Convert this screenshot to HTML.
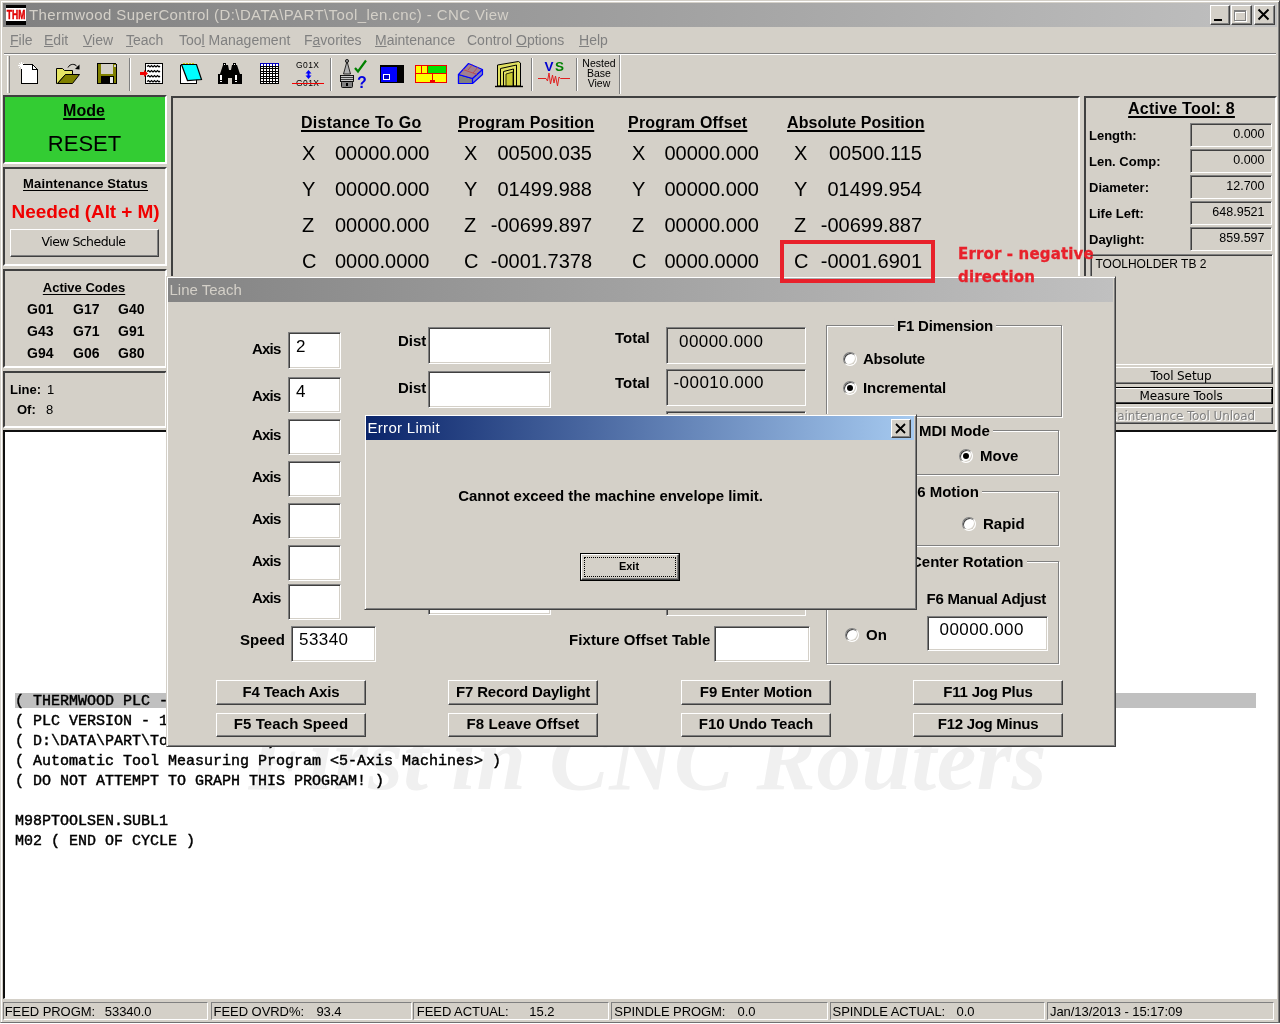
<!DOCTYPE html>
<html><head><meta charset="utf-8"><title>Thermwood SuperControl</title>
<style>
*{box-sizing:border-box;margin:0;padding:0}
html,body{width:1280px;height:1024px;overflow:hidden;background:#d4d0c8;font-family:"Liberation Sans",sans-serif;color:#000}
.a{position:absolute}
.t{position:absolute;white-space:pre;line-height:1}
.b{font-weight:bold}
.u{text-decoration:underline;text-decoration-thickness:1px;text-underline-offset:1.5px;text-decoration-skip-ink:none}
.u2{text-decoration:underline;text-decoration-thickness:2px;text-underline-offset:1.8px;text-decoration-skip-ink:none}
.panel{position:absolute;border:2px solid;border-color:#404040 #fff #fff #404040;background:#d4d0c8}
.btn{position:absolute;background:#d4d0c8;border:1px solid;border-color:#fff #404040 #404040 #fff;box-shadow:inset -1px -1px 0 #808080}
.edit{position:absolute;background:#fff;border:1px solid;border-color:#808080 #fff #fff #808080;box-shadow:inset 1px 1px 0 #404040,inset -1px -1px 0 #d4d0c8}
.ro{position:absolute;background:#d4d0c8;border:1px solid;border-color:#808080 #fff #fff #808080;box-shadow:inset 1px 1px 0 #404040}
.grp{position:absolute;border:1px solid #808080;box-shadow:inset 1px 1px 0 #fff,1px 1px 0 #fff}
.dlg{position:absolute;background:#d4d0c8;border:1px solid;border-color:#d4d0c8 #404040 #404040 #d4d0c8;box-shadow:inset 1px 1px 0 #fff,inset -1px -1px 0 #808080}
.radio{position:absolute;width:14px;height:14px;border-radius:50%;background:#fff;border:1px solid;border-color:#808080 #fff #fff #808080;box-shadow:inset 1px 1px 0 #404040,inset -1px -1px 0 #d4d0c8}
.radio.on::after{content:"";position:absolute;left:3px;top:3px;width:6px;height:6px;border-radius:50%;background:#000}
.sb{position:absolute;border:1px solid;border-color:#808080 #fff #fff #808080;top:1002px;height:18px}
</style></head><body><div id="desk" style="position:absolute;left:0;top:0;width:1280px;height:1024px;overflow:hidden;will-change:transform">
<div class="a" style="left:0;top:1023px;width:1280px;height:1px;background:#fff"></div><div class="a" style="left:0;top:0;width:1280px;height:1023px;border:1px solid;border-color:#d4d0c8 #404040 #707070 #d4d0c8;box-shadow:inset 1px 1px 0 #fff,inset -1px 0 0 #808080"></div>
<div class="a" style="left:3px;top:3px;width:1274px;height:24px;background:linear-gradient(90deg,#808080,#c0c0c0)"></div>
<svg class="a" style="left:6px;top:5px" width="20" height="20" viewBox="0 0 20 20"><rect width="20" height="20" fill="#000"/><rect y="3" width="20" height="13" fill="#fff"/><text x="10" y="14" text-anchor="middle" font-family="Liberation Sans,sans-serif" font-weight="bold" font-size="12" fill="#e00000" stroke="#e00000" stroke-width="0.5" textLength="18.5" lengthAdjust="spacingAndGlyphs">THM</text></svg>
<div class="t " style="left:29px;top:7.30px;font-size:15px;color:#d4d0c8;letter-spacing:0.4px">Thermwood SuperControl (D:\DATA\PART\Tool_len.cnc) - CNC View</div>
<div class="btn" style="left:1210px;top:5px;width:20px;height:20px;"></div>
<div class="btn" style="left:1231px;top:5px;width:21px;height:20px;"></div>
<div class="btn" style="left:1254px;top:5px;width:21px;height:20px;"></div>
<div class="a" style="left:1214px;top:19px;width:8px;height:2px;background:#000"></div>
<div class="a" style="left:1234px;top:10px;width:12px;height:11px;border:1px solid #808080;border-top-width:2px;box-shadow:1px 1px 0 #fff,inset 1px 1px 0 #fff"></div>
<svg class="a" style="left:1257px;top:8px" width="13" height="13" viewBox="0 0 13 13"><path d="M1.5 1.5 L11.5 11.5 M11.5 1.5 L1.5 11.5" stroke="#000" stroke-width="2"/></svg>
<div class="t " style="left:10px;top:33.15px;font-size:14px;color:#808080"><u>F</u>ile</div>
<div class="t " style="left:44px;top:33.15px;font-size:14px;color:#808080"><u>E</u>dit</div>
<div class="t " style="left:83px;top:33.15px;font-size:14px;color:#808080"><u>V</u>iew</div>
<div class="t " style="left:126px;top:33.15px;font-size:14px;color:#808080"><u>T</u>each</div>
<div class="t " style="left:179px;top:33.15px;font-size:14px;color:#808080">Too<u>l</u> Management</div>
<div class="t " style="left:304px;top:33.15px;font-size:14px;color:#808080">F<u>a</u>vorites</div>
<div class="t " style="left:375px;top:33.15px;font-size:14px;color:#808080"><u>M</u>aintenance</div>
<div class="t " style="left:467px;top:33.15px;font-size:14px;color:#808080">Control <u>O</u>ptions</div>
<div class="t " style="left:579px;top:33.15px;font-size:14px;color:#808080"><u>H</u>elp</div>
<div class="a" style="left:4px;top:53px;width:1272px;height:2px;border-top:1px solid #808080;border-bottom:1px solid #fff"></div>
<div class="a" style="left:7px;top:56px;width:3px;height:37px;border-left:1px solid #fff;border-right:1px solid #808080"></div>
<div class="a" style="left:129px;top:58px;width:2px;height:33px;border-left:1px solid #808080;border-right:1px solid #fff"></div>
<div class="a" style="left:330px;top:58px;width:2px;height:33px;border-left:1px solid #808080;border-right:1px solid #fff"></div>
<div class="a" style="left:531px;top:58px;width:2px;height:33px;border-left:1px solid #808080;border-right:1px solid #fff"></div>
<div class="a" style="left:576px;top:58px;width:2px;height:33px;border-left:1px solid #808080;border-right:1px solid #fff"></div>
<div class="a" style="left:619px;top:55px;width:2px;height:39px;border-left:1px solid #808080;border-right:1px solid #fff"></div>
<svg class="a" style="left:0;top:52px" width="640" height="46" viewBox="0 52 640 46" shape-rendering="crispEdges">
<!-- new -->
<path d="M21.5 64.5H32.5L37.5 69.5V83.5H21.5Z" fill="#fff" stroke="#000"/>
<path d="M32.5 64.5V69.5H37.5" fill="none" stroke="#000"/>
<path d="M18 65.5H25M21.5 62V69M19 63L24 68M24 63L19 68" stroke="#fff" stroke-width="1" shape-rendering="auto"/>
<!-- open -->
<path d="M56.5 83.5V68.5H62.5L64.5 70.5H72.5V74.5L65.5 74.5L57.5 83.5Z" fill="#e6e664" stroke="#000" shape-rendering="auto"/>
<path d="M57.5 83.5L65.5 74.5H79.5L72.5 83.5Z" fill="#808000" stroke="#000" shape-rendering="auto"/>
<path d="M68 67.5C70 63.5 75 63.5 77 66.5" fill="none" stroke="#000" shape-rendering="auto"/>
<path d="M75 69L79.5 64.5V69.5Z" fill="#000" shape-rendering="auto"/>
<!-- save -->
<path d="M97.5 63.5H115.5L116.5 64.5V83.5H97.5Z" fill="#808000" stroke="#000"/>
<rect x="101" y="64" width="12" height="10" fill="#d4d0c8"/>
<rect x="113" y="64" width="1" height="10" fill="#000" opacity=".0"/>
<rect x="101" y="76" width="13" height="8" fill="#000"/>
<rect x="110" y="77" width="3" height="6" fill="#e8e8e8"/>
<rect x="114" y="65" width="2" height="2" fill="#d4d0c8"/>
<!-- doc w/ arrow -->
<rect x="145.5" y="63.5" width="17" height="20" fill="#fff" stroke="#000"/>
<g fill="none" stroke="#000" stroke-width="1.2" shape-rendering="auto">
<path d="M147 66.5l1.5-1 1.5 1.5 1.5-1.5 1.5 1.5 1.5-1.5 1.5 1.5 1.5-1.5 1.5 1.5 1-1"/>
<path d="M147 71.5l1.5-1 1.5 1.5 1.5-1.5 1.5 1.5 1.5-1.5 1.5 1.5 1.5-1.5 1.5 1.5 1-1"/>
<path d="M147 76.5l1.5-1 1.5 1.5 1.5-1.5 1.5 1.5 1.5-1.5 1.5 1.5 1.5-1.5 1.5 1.5 1-1"/>
<path d="M147 81.5l1.5-1 1.5 1.5 1.5-1.5 1.5 1.5 1.5-1.5 1.5 1.5 1.5-1.5 1.5 1.5 1-1"/>
</g>
<path d="M140 72H144V70L148 73.5L144 77V75H140Z" fill="#f00000" shape-rendering="auto"/>
<!-- notepad -->
<path d="M180.5 64.5V83.5H196.5V79" fill="#fff" stroke="#000"/>
<path d="M181.5 64.5H196.5L201.5 79.5L187.5 80.5Z" fill="#00ffff" stroke="#000" stroke-width="1.2" shape-rendering="auto"/>
<path d="M183 63.5H195" stroke="#c8c800" stroke-width="1" stroke-dasharray="1.5 1.5"/>
<!-- binoculars -->
<g fill="#000">
<rect x="218" y="74" width="10" height="10"/><rect x="232" y="74" width="10" height="10"/>
<path d="M220 74L223 65H228L229 70H231L232 65H237L240 74Z" shape-rendering="auto"/>
<rect x="223" y="63" width="3" height="3"/><rect x="233" y="63" width="3" height="3"/>
<rect x="226" y="70" width="8" height="8"/>
</g>
<rect x="220" y="75" width="2" height="5" fill="#fff"/><rect x="235" y="75" width="2" height="5" fill="#fff"/>
<rect x="220" y="81" width="2" height="1" fill="#fff"/><rect x="235" y="81" width="2" height="1" fill="#fff"/>
<rect x="224" y="64" width="1" height="1" fill="#fff"/><rect x="234" y="64" width="1" height="1" fill="#fff"/>
<!-- grid -->
<rect x="260" y="63" width="19" height="21" fill="#000"/>
<rect x="260" y="63" width="19" height="3" fill="#0000c0"/>
<g fill="#fff">
<rect x="261" y="64.0" width="2" height="1.5"/>
<rect x="264" y="64.0" width="2" height="1.5"/>
<rect x="267" y="64.0" width="2" height="1.5"/>
<rect x="270" y="64.0" width="2" height="1.5"/>
<rect x="273" y="64.0" width="2" height="1.5"/>
<rect x="276" y="64.0" width="2" height="1.5"/>
<rect x="261" y="66.5" width="2" height="1.5"/>
<rect x="264" y="66.5" width="2" height="1.5"/>
<rect x="267" y="66.5" width="2" height="1.5"/>
<rect x="270" y="66.5" width="2" height="1.5"/>
<rect x="273" y="66.5" width="2" height="1.5"/>
<rect x="276" y="66.5" width="2" height="1.5"/>
<rect x="261" y="69.0" width="2" height="1.5"/>
<rect x="264" y="69.0" width="2" height="1.5"/>
<rect x="267" y="69.0" width="2" height="1.5"/>
<rect x="270" y="69.0" width="2" height="1.5"/>
<rect x="273" y="69.0" width="2" height="1.5"/>
<rect x="276" y="69.0" width="2" height="1.5"/>
<rect x="261" y="71.5" width="2" height="1.5"/>
<rect x="264" y="71.5" width="2" height="1.5"/>
<rect x="267" y="71.5" width="2" height="1.5"/>
<rect x="270" y="71.5" width="2" height="1.5"/>
<rect x="273" y="71.5" width="2" height="1.5"/>
<rect x="276" y="71.5" width="2" height="1.5"/>
<rect x="261" y="74.0" width="2" height="1.5"/>
<rect x="264" y="74.0" width="2" height="1.5"/>
<rect x="267" y="74.0" width="2" height="1.5"/>
<rect x="270" y="74.0" width="2" height="1.5"/>
<rect x="273" y="74.0" width="2" height="1.5"/>
<rect x="276" y="74.0" width="2" height="1.5"/>
<rect x="261" y="76.5" width="2" height="1.5"/>
<rect x="264" y="76.5" width="2" height="1.5"/>
<rect x="267" y="76.5" width="2" height="1.5"/>
<rect x="270" y="76.5" width="2" height="1.5"/>
<rect x="273" y="76.5" width="2" height="1.5"/>
<rect x="276" y="76.5" width="2" height="1.5"/>
<rect x="261" y="79.0" width="2" height="1.5"/>
<rect x="264" y="79.0" width="2" height="1.5"/>
<rect x="267" y="79.0" width="2" height="1.5"/>
<rect x="270" y="79.0" width="2" height="1.5"/>
<rect x="273" y="79.0" width="2" height="1.5"/>
<rect x="276" y="79.0" width="2" height="1.5"/>
<rect x="261" y="81.5" width="2" height="1.5"/>
<rect x="264" y="81.5" width="2" height="1.5"/>
<rect x="267" y="81.5" width="2" height="1.5"/>
<rect x="270" y="81.5" width="2" height="1.5"/>
<rect x="273" y="81.5" width="2" height="1.5"/>
<rect x="276" y="81.5" width="2" height="1.5"/>
</g>
<!-- G01X -->
<g font-family="Liberation Sans,sans-serif" font-size="8.5" fill="#000" shape-rendering="auto">
<text x="296" y="67.8" textLength="23">G01X</text>
<text x="296" y="85.8" textLength="23">G01X</text>
</g>
<path d="M292 83.5H324" stroke="#f00000" stroke-width="1"/>
<path d="M308.5 70L311.5 73.5H309.5V75.5H311.5L308.5 79L305.5 75.5H307.5V73.5H305.5Z" fill="#0000ff" shape-rendering="auto"/>
<!-- tool holder -->
<g shape-rendering="auto">
<circle cx="347" cy="61" r="1.6" fill="#808080" stroke="#000" stroke-width=".8"/>
<path d="M346.5 63L343.5 74H350.5L347.5 63Z" fill="#b0b0b0" stroke="#000" stroke-width=".8"/>
<rect x="340.5" y="75.5" width="13" height="6" fill="#c8c8c8" stroke="#000" stroke-width=".9"/>
<path d="M340.5 77.5H353.5M340.5 79.5H353.5" stroke="#000" stroke-width=".7"/>
<rect x="341.5" y="81.5" width="11" height="6" rx="1" fill="#808080" stroke="#000" stroke-width=".9"/>
<rect x="346" y="83" width="2" height="3" fill="#000"/>
<path d="M355 68L358 71.5L366 60.5" fill="none" stroke="#008000" stroke-width="2.2"/>
<text x="357" y="87.5" font-family="Liberation Sans,sans-serif" font-size="16" font-weight="bold" fill="#0000e0">?</text>
</g>
<!-- blue/black -->
<rect x="380" y="65" width="24" height="18" fill="#000"/>
<rect x="381" y="67" width="16" height="15" fill="#0000ff"/>
<rect x="383.5" y="74.5" width="6" height="5" fill="#0000c0" stroke="#fff"/>
<!-- layout -->
<rect x="415.5" y="65.5" width="31" height="17" fill="#ffff00" stroke="#f00000"/>
<rect x="428" y="66" width="18" height="7" fill="#00e000"/>
<path d="M415.5 73.5H446.5M421.5 66V73M427.5 66V73M432.5 74V82" stroke="#f00000" fill="none"/>
<rect x="430" y="80" width="5" height="3" fill="#f00000"/>
<!-- 3D block -->
<g shape-rendering="auto" stroke="#0000ff" stroke-width="1.2" stroke-linejoin="round">
<path d="M458.5 74.5V83.5H472.5L482.5 74.5V69.5L472.5 78Z" fill="#8080c0"/>
<path d="M458.5 74.5V83.5H472.5V78.5Z" fill="#808080"/>
<path d="M458.5 74.5L468.5 63.5L482.5 69.5L472.5 78.5Z" fill="#a08090"/>
<path d="M463 69.5L477 74.5M468 70L472.5 64.5M473 73L478 67" stroke="#c04040" stroke-width=".8" fill="none"/>
</g>
<!-- arch -->
<g shape-rendering="auto">
<path d="M497.5 86V65L518.5 61.5L520.5 63V86Z" fill="#e0e060" stroke="#000" stroke-width="1"/>
<path d="M500.5 86V68.5L516.5 65V86M503.5 86V71.5L513.5 69V86" fill="none" stroke="#000" stroke-width="1"/>
<path d="M506 86V74L513 72V86Z" fill="#c8c830" stroke="#000" stroke-width=".8"/>
<path d="M495 86.5H523" stroke="#000" stroke-width="1.4"/>
</g>
<!-- VS -->
<g font-family="Liberation Sans,sans-serif" font-size="13" font-weight="bold" shape-rendering="auto">
<text x="544.5" y="71" fill="#0000d0" textLength="9" lengthAdjust="spacingAndGlyphs">V</text>
<text x="555" y="71" fill="#008000" textLength="9" lengthAdjust="spacingAndGlyphs">S</text>
</g>
<path d="M538 78.5H546L547.5 81L549 73L550.5 84L552.5 75L554 83L555.5 76L557.5 86L559 77L560.5 78.5H570" fill="none" stroke="#e02020" stroke-width="1" shape-rendering="auto"/>
</svg>

<div class="t " style="left:599px;transform:translateX(-50%);top:58.11px;font-size:10.5px;">Nested</div>
<div class="t " style="left:599px;transform:translateX(-50%);top:67.61px;font-size:10.5px;">Base</div>
<div class="t " style="left:599px;transform:translateX(-50%);top:77.61px;font-size:10.5px;">View</div>
<div class="panel" style="left:3px;top:95px;width:164px;height:69px;background:#33cc33"></div>
<div class="t b u2" style="left:84px;transform:translateX(-50%);top:103.46px;font-size:16px;">Mode</div>
<div class="t " style="left:84.5px;transform:translateX(-50%);top:132.88px;font-size:22px;">RESET</div>
<div class="panel" style="left:3px;top:167px;width:164px;height:99px;"></div>
<div class="t b u" style="left:85.5px;transform:translateX(-50%);top:176.50px;font-size:13px;letter-spacing:0.16px">Maintenance Status</div>
<div class="t b" style="left:85.5px;transform:translateX(-50%);top:202.42px;font-size:19px;color:#f00000;letter-spacing:-0.1px">Needed (Alt + M)</div>
<div class="btn" style="left:10px;top:229px;width:149px;height:28px;"></div>
<div class="t " style="left:83.5px;transform:translateX(-50%);top:235.93px;font-size:12.5px;font-family:'DejaVu Sans',sans-serif;letter-spacing:-0.55px">View Schedule</div>
<div class="panel" style="left:3px;top:269px;width:164px;height:99px;"></div>
<div class="t b u" style="left:84px;transform:translateX(-50%);top:281.00px;font-size:13px;">Active Codes</div>
<div class="t b" style="left:27px;top:302.15px;font-size:14px;">G01</div>
<div class="t b" style="left:73px;top:302.15px;font-size:14px;">G17</div>
<div class="t b" style="left:118px;top:302.15px;font-size:14px;">G40</div>
<div class="t b" style="left:27px;top:324.15px;font-size:14px;">G43</div>
<div class="t b" style="left:73px;top:324.15px;font-size:14px;">G71</div>
<div class="t b" style="left:118px;top:324.15px;font-size:14px;">G91</div>
<div class="t b" style="left:27px;top:346.15px;font-size:14px;">G94</div>
<div class="t b" style="left:73px;top:346.15px;font-size:14px;">G06</div>
<div class="t b" style="left:118px;top:346.15px;font-size:14px;">G80</div>
<div class="panel" style="left:3px;top:371px;width:164px;height:57px;"></div>
<div class="t b" style="left:10px;top:383.00px;font-size:13px;">Line:</div>
<div class="t " style="left:47px;top:383.00px;font-size:13px;">1</div>
<div class="t b" style="left:17px;top:403.00px;font-size:13px;">Of:</div>
<div class="t " style="left:46px;top:403.00px;font-size:13px;">8</div>
<div class="panel" style="left:171px;top:96px;width:909px;height:336px;"></div>
<div class="t b u2" style="left:301px;top:114.96px;font-size:16px;letter-spacing:0.31px">Distance To Go</div>
<div class="t b u2" style="left:458px;top:114.96px;font-size:16px;letter-spacing:0.18px">Program Position</div>
<div class="t b u2" style="left:628px;top:114.96px;font-size:16px;letter-spacing:0.21px">Program Offset</div>
<div class="t b u2" style="left:787px;top:114.96px;font-size:16px;letter-spacing:0.09px">Absolute Position</div>
<div class="t " style="left:302px;top:143.07px;font-size:20px;">X</div>
<div class="t " style="right:850.5px;top:143.07px;font-size:20px;">00000.000</div>
<div class="t " style="left:464px;top:143.07px;font-size:20px;">X</div>
<div class="t " style="right:688px;top:143.07px;font-size:20px;">00500.035</div>
<div class="t " style="left:632px;top:143.07px;font-size:20px;">X</div>
<div class="t " style="right:521px;top:143.07px;font-size:20px;">00000.000</div>
<div class="t " style="left:794px;top:143.07px;font-size:20px;">X</div>
<div class="t " style="right:358px;top:143.07px;font-size:20px;">00500.115</div>
<div class="t " style="left:302px;top:179.07px;font-size:20px;">Y</div>
<div class="t " style="right:850.5px;top:179.07px;font-size:20px;">00000.000</div>
<div class="t " style="left:464px;top:179.07px;font-size:20px;">Y</div>
<div class="t " style="right:688px;top:179.07px;font-size:20px;">01499.988</div>
<div class="t " style="left:632px;top:179.07px;font-size:20px;">Y</div>
<div class="t " style="right:521px;top:179.07px;font-size:20px;">00000.000</div>
<div class="t " style="left:794px;top:179.07px;font-size:20px;">Y</div>
<div class="t " style="right:358px;top:179.07px;font-size:20px;">01499.954</div>
<div class="t " style="left:302px;top:215.07px;font-size:20px;">Z</div>
<div class="t " style="right:850.5px;top:215.07px;font-size:20px;">00000.000</div>
<div class="t " style="left:464px;top:215.07px;font-size:20px;">Z</div>
<div class="t " style="right:688px;top:215.07px;font-size:20px;">-00699.897</div>
<div class="t " style="left:632px;top:215.07px;font-size:20px;">Z</div>
<div class="t " style="right:521px;top:215.07px;font-size:20px;">00000.000</div>
<div class="t " style="left:794px;top:215.07px;font-size:20px;">Z</div>
<div class="t " style="right:358px;top:215.07px;font-size:20px;">-00699.887</div>
<div class="t " style="left:302px;top:251.07px;font-size:20px;">C</div>
<div class="t " style="right:850.5px;top:251.07px;font-size:20px;">0000.0000</div>
<div class="t " style="left:464px;top:251.07px;font-size:20px;">C</div>
<div class="t " style="right:688px;top:251.07px;font-size:20px;">-0001.7378</div>
<div class="t " style="left:632px;top:251.07px;font-size:20px;">C</div>
<div class="t " style="right:521px;top:251.07px;font-size:20px;">0000.0000</div>
<div class="t " style="left:794px;top:251.07px;font-size:20px;">C</div>
<div class="t " style="right:358px;top:251.07px;font-size:20px;">-0001.6901</div>
<div class="panel" style="left:1084px;top:96px;width:193px;height:336px;"></div>
<div class="t b u2" style="left:1181.5px;transform:translateX(-50%);top:101.46px;font-size:16px;letter-spacing:0.22px">Active Tool: 8</div>
<div class="t b" style="left:1089px;top:129.00px;font-size:13px;">Length:</div>
<div class="ro" style="left:1190px;top:123px;width:82px;height:24px;"></div>
<div class="t " style="right:15.5px;top:128.12px;font-size:12.5px;">0.000</div>
<div class="t b" style="left:1089px;top:155.00px;font-size:13px;">Len. Comp:</div>
<div class="ro" style="left:1190px;top:149px;width:82px;height:24px;"></div>
<div class="t " style="right:15.5px;top:154.12px;font-size:12.5px;">0.000</div>
<div class="t b" style="left:1089px;top:181.00px;font-size:13px;">Diameter:</div>
<div class="ro" style="left:1190px;top:175px;width:82px;height:24px;"></div>
<div class="t " style="right:15.5px;top:180.12px;font-size:12.5px;">12.700</div>
<div class="t b" style="left:1089px;top:207.00px;font-size:13px;">Life Left:</div>
<div class="ro" style="left:1190px;top:201px;width:82px;height:24px;"></div>
<div class="t " style="right:15.5px;top:206.12px;font-size:12.5px;">648.9521</div>
<div class="t b" style="left:1089px;top:233.00px;font-size:13px;">Daylight:</div>
<div class="ro" style="left:1190px;top:227px;width:82px;height:24px;"></div>
<div class="t " style="right:15.5px;top:232.12px;font-size:12.5px;">859.597</div>
<div class="ro" style="left:1090px;top:254px;width:183px;height:111px;"></div>
<div class="t " style="left:1095.5px;top:257.84px;font-size:12px;">TOOLHOLDER TB 2</div>
<div class="btn" style="left:1088px;top:367px;width:185px;height:17px;"></div>
<div class="t " style="left:1181px;transform:translateX(-50%);top:369.85px;font-size:12px;font-family:'DejaVu Sans',sans-serif;letter-spacing:-0.1px">Tool Setup</div>
<div class="btn" style="left:1088px;top:387px;width:185px;height:17px;border-color:#000;box-shadow:inset 1px 1px 0 #fff,inset -1px -1px 0 #404040"></div>
<div class="t " style="left:1181px;transform:translateX(-50%);top:389.85px;font-size:12px;font-family:'DejaVu Sans',sans-serif;letter-spacing:-0.1px">Measure Tools</div>
<div class="btn" style="left:1088px;top:407px;width:185px;height:17px;"></div>
<div class="t " style="left:1181px;transform:translateX(-50%);top:409.85px;font-size:12px;font-family:'DejaVu Sans',sans-serif;letter-spacing:-0.1px;color:#808080;text-shadow:1px 1px 0 #fff">Maintenance Tool Unload</div>
<div class="a" style="left:3px;top:430px;width:1274px;height:569px;background:#fff;border:2px solid;border-color:#101010 #fff #fff #101010;border-right-width:1px;border-bottom-width:1px"></div>
<div class="t b" style="left:248px;top:715.46px;font-size:89px;font-family:'Liberation Serif',serif;font-style:italic;color:#f0f0f0;letter-spacing:0.5px">First in CNC Routers</div>
<div class="a" style="left:15px;top:692.5px;width:1241px;height:15.5px;background:#c0c0c0"></div>
<div class="t " style="left:15px;top:693.80px;font-size:15px;font-family:'Liberation Mono',monospace;-webkit-text-stroke:0.45px #000">( THERMWOOD PLC - </div>
<div class="t " style="left:15px;top:713.80px;font-size:15px;font-family:'Liberation Mono',monospace;-webkit-text-stroke:0.45px #000">( PLC VERSION - 1</div>
<div class="t " style="left:15px;top:733.80px;font-size:15px;font-family:'Liberation Mono',monospace;-webkit-text-stroke:0.45px #000">( D:\DATA\PART\Tool_len.cnc )</div>
<div class="t " style="left:15px;top:753.80px;font-size:15px;font-family:'Liberation Mono',monospace;-webkit-text-stroke:0.45px #000">( Automatic Tool Measuring Program &lt;5-Axis Machines&gt; )</div>
<div class="t " style="left:15px;top:773.80px;font-size:15px;font-family:'Liberation Mono',monospace;-webkit-text-stroke:0.45px #000">( DO NOT ATTEMPT TO GRAPH THIS PROGRAM! )</div>
<div class="t " style="left:15px;top:813.80px;font-size:15px;font-family:'Liberation Mono',monospace;-webkit-text-stroke:0.45px #000">M98PTOOLSEN.SUBL1</div>
<div class="t " style="left:15px;top:833.80px;font-size:15px;font-family:'Liberation Mono',monospace;-webkit-text-stroke:0.45px #000">M02 ( END OF CYCLE )</div>
<div class="sb" style="left:3px;width:205px"></div>
<div class="t " style="left:4.7px;top:1005.00px;font-size:13px;letter-spacing:-0.06px">FEED PROGM:</div>
<div class="t " style="left:104.8px;top:1005.00px;font-size:13px;letter-spacing:-0.06px">53340.0</div>
<div class="sb" style="left:211px;width:201px"></div>
<div class="t " style="left:213.6px;top:1005.00px;font-size:13px;letter-spacing:-0.06px">FEED OVRD%:</div>
<div class="t " style="left:316.4px;top:1005.00px;font-size:13px;letter-spacing:-0.06px">93.4</div>
<div class="sb" style="left:413px;width:196px"></div>
<div class="t " style="left:416.8px;top:1005.00px;font-size:13px;letter-spacing:-0.06px">FEED ACTUAL:</div>
<div class="t " style="left:529.3px;top:1005.00px;font-size:13px;letter-spacing:-0.06px">15.2</div>
<div class="sb" style="left:611px;width:217px"></div>
<div class="t " style="left:614.3px;top:1005.00px;font-size:13px;letter-spacing:-0.06px">SPINDLE PROGM:</div>
<div class="t " style="left:737.6px;top:1005.00px;font-size:13px;letter-spacing:-0.06px">0.0</div>
<div class="sb" style="left:830px;width:215px"></div>
<div class="t " style="left:832.6px;top:1005.00px;font-size:13px;letter-spacing:-0.06px">SPINDLE ACTUAL:</div>
<div class="t " style="left:956.5px;top:1005.00px;font-size:13px;letter-spacing:-0.06px">0.0</div>
<div class="sb" style="left:1047px;width:227px"></div>
<div class="t " style="left:1050px;top:1005.00px;font-size:13px;letter-spacing:-0.06px">Jan/13/2013 - 15:17:09</div>
<div class="dlg" style="left:166px;top:276px;width:950px;height:471px;"></div>
<div class="a" style="left:168px;top:278px;width:945px;height:24px;background:linear-gradient(90deg,#848484,#c0c0c0)"></div>
<div class="t " style="left:169.5px;top:282.30px;font-size:15px;color:#d4d0c8">Line Teach</div>
<div class="t b" style="left:252px;top:341.30px;font-size:15px;letter-spacing:-0.8px">Axis</div>
<div class="edit" style="left:288px;top:332px;width:53px;height:37px;"></div>
<div class="t b" style="left:252px;top:388.30px;font-size:15px;letter-spacing:-0.8px">Axis</div>
<div class="edit" style="left:288px;top:377px;width:53px;height:36px;"></div>
<div class="t b" style="left:252px;top:426.80px;font-size:15px;letter-spacing:-0.8px">Axis</div>
<div class="edit" style="left:288px;top:419px;width:53px;height:36px;"></div>
<div class="t b" style="left:252px;top:468.80px;font-size:15px;letter-spacing:-0.8px">Axis</div>
<div class="edit" style="left:288px;top:461px;width:53px;height:36px;"></div>
<div class="t b" style="left:252px;top:510.80px;font-size:15px;letter-spacing:-0.8px">Axis</div>
<div class="edit" style="left:288px;top:503px;width:53px;height:36px;"></div>
<div class="t b" style="left:252px;top:552.80px;font-size:15px;letter-spacing:-0.8px">Axis</div>
<div class="edit" style="left:288px;top:545px;width:53px;height:36px;"></div>
<div class="t b" style="left:252px;top:589.80px;font-size:15px;letter-spacing:-0.8px">Axis</div>
<div class="edit" style="left:288px;top:584px;width:53px;height:36px;"></div>
<div class="t " style="left:296px;top:337.61px;font-size:17px;">2</div>
<div class="t " style="left:296px;top:382.61px;font-size:17px;">4</div>
<div class="t b" style="left:398px;top:333.30px;font-size:15px;">Dist</div>
<div class="t b" style="left:398px;top:380.30px;font-size:15px;">Dist</div>
<div class="edit" style="left:428px;top:327px;width:123px;height:37px;"></div>
<div class="edit" style="left:428px;top:371px;width:123px;height:37px;"></div>
<div class="t b" style="left:615px;top:330.30px;font-size:15px;">Total</div>
<div class="t b" style="left:615px;top:375.30px;font-size:15px;">Total</div>
<div class="ro" style="left:666px;top:327px;width:140px;height:37px;"></div>
<div class="ro" style="left:666px;top:369px;width:140px;height:37px;"></div>
<div class="t " style="left:679px;top:332.61px;font-size:17px;letter-spacing:0.45px">00000.000</div>
<div class="t " style="left:673.5px;top:374.11px;font-size:17px;letter-spacing:0.45px">-00010.000</div>
<div class="ro" style="left:666px;top:411px;width:140px;height:36px;"></div>
<div class="edit" style="left:428px;top:579px;width:123px;height:36px;"></div>
<div class="ro" style="left:666px;top:579px;width:140px;height:37px;"></div>
<div class="t b" style="left:240px;top:632.30px;font-size:15px;">Speed</div>
<div class="edit" style="left:291px;top:626px;width:85px;height:36px;"></div>
<div class="t " style="left:299px;top:631.11px;font-size:17px;letter-spacing:0.45px">53340</div>
<div class="t b" style="left:569px;top:632.30px;font-size:15px;letter-spacing:0.08px">Fixture Offset Table</div>
<div class="edit" style="left:714px;top:626px;width:96px;height:36px;"></div>
<div class="grp" style="left:826px;top:325px;width:236px;height:92px;"></div>
<div class="t b" style="left:945px;transform:translateX(-50%);top:318.30px;font-size:15px;background:#d4d0c8;padding:0 3px;letter-spacing:-0.2px">F1 Dimension</div>
<div class="radio" style="left:843px;top:352px"></div>
<div class="t b" style="left:863px;top:351.30px;font-size:15px;letter-spacing:-0.3px">Absolute</div>
<div class="radio on" style="left:843px;top:381px"></div>
<div class="t b" style="left:863px;top:380.30px;font-size:15px;letter-spacing:-0.1px">Incremental</div>
<div class="grp" style="left:826px;top:430px;width:233px;height:45px;"></div>
<div class="t b" style="left:916px;top:423.30px;font-size:15px;background:#d4d0c8;padding:0 3px">MDI Mode</div>
<div class="radio on" style="left:959px;top:449px"></div>
<div class="t b" style="left:980px;top:448.30px;font-size:15px;">Move</div>
<div class="grp" style="left:826px;top:491px;width:233px;height:55px;"></div>
<div class="t b" style="left:905px;top:484.30px;font-size:15px;background:#d4d0c8;padding:0 3px">F6 Motion</div>
<div class="radio" style="left:962px;top:517px"></div>
<div class="t b" style="left:983px;top:516.30px;font-size:15px;">Rapid</div>
<div class="grp" style="left:826px;top:561px;width:233px;height:103px;"></div>
<div class="t b" style="left:908px;top:554.30px;font-size:15px;background:#d4d0c8;padding:0 3px">Center Rotation</div>
<div class="t b" style="left:926.5px;top:591.30px;font-size:15px;letter-spacing:-0.25px">F6 Manual Adjust</div>
<div class="edit" style="left:927px;top:616px;width:121px;height:35px;"></div>
<div class="t " style="left:939.5px;top:620.61px;font-size:17px;letter-spacing:0.45px">00000.000</div>
<div class="radio" style="left:845px;top:628px"></div>
<div class="t b" style="left:866px;top:627.30px;font-size:15px;">On</div>
<div class="btn" style="left:216px;top:680px;width:150px;height:25px;"></div>
<div class="t b" style="left:291.0px;transform:translateX(-50%);top:683.80px;font-size:15px;letter-spacing:-0.18px">F4 Teach Axis</div>
<div class="btn" style="left:216px;top:713px;width:150px;height:24px;"></div>
<div class="t b" style="left:291.0px;transform:translateX(-50%);top:715.60px;font-size:15px;letter-spacing:0.1px">F5 Teach Speed</div>
<div class="btn" style="left:448px;top:680px;width:150px;height:25px;"></div>
<div class="t b" style="left:523.0px;transform:translateX(-50%);top:683.80px;font-size:15px;letter-spacing:-0.14px">F7 Record Daylight</div>
<div class="btn" style="left:448px;top:713px;width:150px;height:24px;"></div>
<div class="t b" style="left:523.0px;transform:translateX(-50%);top:715.60px;font-size:15px;letter-spacing:0.07px">F8 Leave Offset</div>
<div class="btn" style="left:681px;top:680px;width:150px;height:25px;"></div>
<div class="t b" style="left:756.0px;transform:translateX(-50%);top:683.80px;font-size:15px;letter-spacing:-0.06px">F9 Enter Motion</div>
<div class="btn" style="left:681px;top:713px;width:150px;height:24px;"></div>
<div class="t b" style="left:756.0px;transform:translateX(-50%);top:715.60px;font-size:15px;letter-spacing:-0.02px">F10 Undo Teach</div>
<div class="btn" style="left:913px;top:680px;width:150px;height:25px;"></div>
<div class="t b" style="left:988.0px;transform:translateX(-50%);top:683.80px;font-size:15px;letter-spacing:-0.19px">F11 Jog Plus</div>
<div class="btn" style="left:913px;top:713px;width:150px;height:24px;"></div>
<div class="t b" style="left:988.0px;transform:translateX(-50%);top:715.60px;font-size:15px;letter-spacing:-0.29px">F12 Jog Minus</div>
<div class="a" style="left:780px;top:240px;width:155px;height:43px;border:4px solid #e8212b"></div>
<div class="t b" style="left:958px;top:247.31px;font-size:15px;font-family:'DejaVu Sans',sans-serif;color:#e8212b;letter-spacing:0.15px;-webkit-text-stroke:0.3px #e8212b">Error - negative</div>
<div class="t b" style="left:958px;top:270.31px;font-size:15px;font-family:'DejaVu Sans',sans-serif;color:#e8212b;letter-spacing:0.15px;-webkit-text-stroke:0.3px #e8212b">direction</div>
<div class="dlg" style="left:364px;top:414px;width:553px;height:196px;"></div>
<div class="a" style="left:366px;top:416px;width:548px;height:24px;background:linear-gradient(90deg,#0a246a,#a6caf0)"></div>
<div class="t " style="left:367.5px;top:420.30px;font-size:15px;color:#fff;letter-spacing:0.3px">Error Limit</div>
<div class="btn" style="left:891px;top:419px;width:20px;height:19px;"></div>
<svg class="a" style="left:895px;top:423px" width="12" height="11" viewBox="0 0 12 11"><path d="M1 1 L10 10 M10 1 L1 10" stroke="#000" stroke-width="1.8"/></svg>
<div class="t b" style="left:610.5px;transform:translateX(-50%);top:488.30px;font-size:15px;letter-spacing:-0.05px">Cannot exceed the machine envelope limit.</div>
<div class="a" style="left:580px;top:553px;width:100px;height:28px;border:1px solid #000"></div>
<div class="btn" style="left:581px;top:554px;width:98px;height:26px;"></div>
<div class="a" style="left:584px;top:557px;width:92px;height:20px;border:1px dotted #000"></div>
<div class="t b" style="left:629px;transform:translateX(-50%);top:560.69px;font-size:11px;">Exit</div>
</div></body></html>
